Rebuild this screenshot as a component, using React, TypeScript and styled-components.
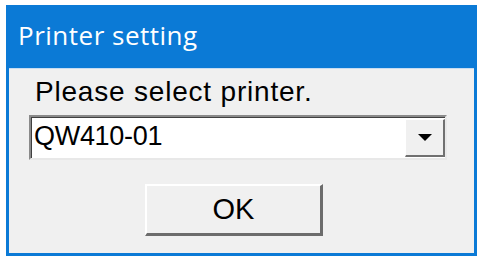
import React from 'react';
import styled, { createGlobalStyle } from 'styled-components';

const Global = createGlobalStyle`
  html, body {
    margin: 0;
    padding: 0;
    background: #ffffff;
  }
`;

const Window = styled.div`
  margin: 5px 0 0 6px;
  width: 471px;
  height: 251px;
  box-sizing: border-box;
  background: #0b7ad6;
  padding: 0 3px 3px;
  display: flex;
  flex-direction: column;
`;

const TitleBar = styled.div`
  height: 63px;
  box-sizing: border-box;
  padding: 13px 0 0 9px;
  color: #ffffff;
  font-family: "Open Sans", "Noto Sans", sans-serif;
  font-size: 26px;
  letter-spacing: 0.5px;
  line-height: 34px;
`;

const Client = styled.div`
  flex: 1;
  background: #f0f0f0;
  border-top: 1px solid #c6dcf2;
  display: flex;
  flex-direction: column;
  padding: 8px 27px 0 20px;
  font-family: "Liberation Sans", Arial, sans-serif;
  color: #000;
`;

const Label = styled.div`
  font-size: 28px;
  letter-spacing: 0.8px;
  line-height: 30px;
  padding-left: 6px;
`;

const Combo = styled.div`
  margin-top: 8px;
  height: 45px;
  box-sizing: border-box;
  display: flex;
  align-items: stretch;
  background: #ffffff;
  border-top: 2px solid #8a8a8a;
  border-left: 2px solid #8a8a8a;
  border-right: 2px solid #e8e8e8;
  border-bottom: 2px solid #e8e8e8;
  box-shadow: inset 1px 1px 0 #404040;
`;

const ComboText = styled.div`
  flex: 1;
  font-size: 27px;
  letter-spacing: -0.3px;
  line-height: 39px;
  padding-left: 3px;
`;

const DropButton = styled.div`
  width: 40px;
  margin: 2px 0 1px;
  box-sizing: border-box;
  background: #f0f0f0;
  border-top: 1px solid #ffffff;
  border-left: 1px solid #ffffff;
  border-right: 2px solid #707070;
  border-bottom: 2px solid #707070;
  display: flex;
  align-items: center;
  justify-content: center;
`;

const Arrow = styled.div`
  width: 0;
  height: 0;
  border-left: 7px solid transparent;
  border-right: 7px solid transparent;
  border-top: 7px solid #000;
`;

const ButtonRow = styled.div`
  display: flex;
  justify-content: flex-start;
  margin-top: 24px;
  padding-left: 116px;
`;

const Button = styled.div`
  width: 178px;
  height: 52px;
  box-sizing: border-box;
  background: #f0f0f0;
  border-top: 2px solid #ffffff;
  border-left: 2px solid #ffffff;
  border-right: 3px solid #6c6c6c;
  border-bottom: 3px solid #6c6c6c;
  display: flex;
  align-items: center;
  justify-content: center;
  font-size: 29px;
`;

export default function App() {
  return (
    <>
      <Global />
      <Window>
        <TitleBar>Printer setting</TitleBar>
        <Client>
          <Label>Please select printer.</Label>
          <Combo>
            <ComboText>QW410-01</ComboText>
            <DropButton>
              <Arrow />
            </DropButton>
          </Combo>
          <ButtonRow>
            <Button>OK</Button>
          </ButtonRow>
        </Client>
      </Window>
    </>
  );
}
